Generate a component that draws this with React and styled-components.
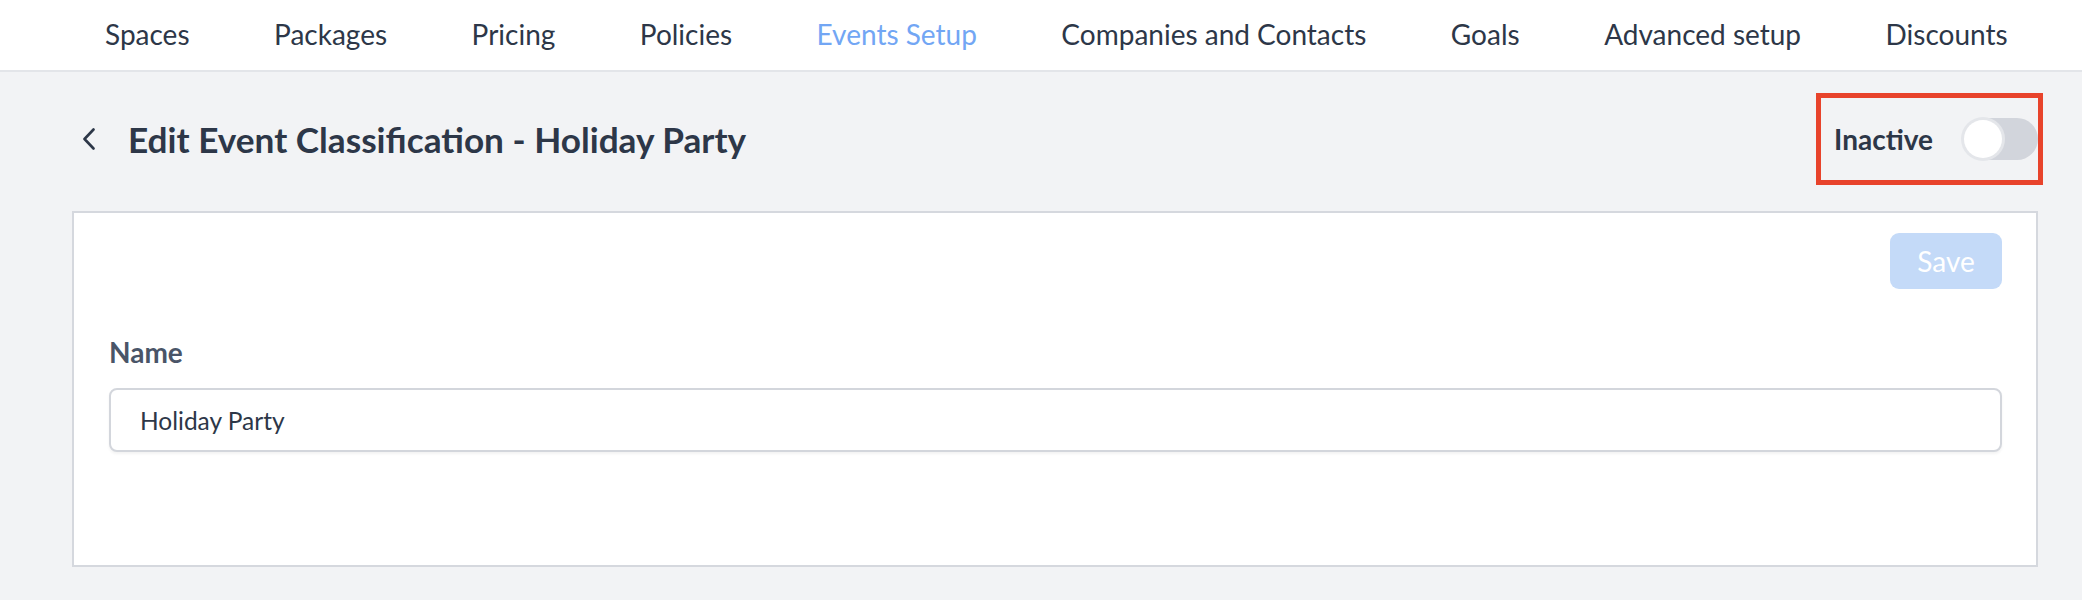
import React, { useState } from "react";
import styled, { createGlobalStyle } from "styled-components";

const GlobalStyle = createGlobalStyle`
  body {
    margin: 0;
    background: #f2f3f5;
    font-family: Lato, "Noto Sans", sans-serif;
    color: #2d3748;
  }
`;

const TopNav = styled.nav`
  height: 70px;
  background: #fff;
  border-bottom: 2px solid #e3e5e9;
  display: flex;
  align-items: center;
  gap: 84.5px;
  padding-left: 105px;
`;

const NavLink = styled.a`
  font-size: 28px;
  line-height: 1.2;
  white-space: nowrap;
  text-decoration: none;
  cursor: pointer;
  color: ${(p) => (p.$active ? "#72a6f4" : "#2d3748")};
`;

const Header = styled.div`
  display: flex;
  align-items: center;
  justify-content: space-between;
  padding: 21px 39px 26px 83px;
`;

const TitleGroup = styled.div`
  display: flex;
  align-items: center;
  gap: 33px;
`;

const BackButton = styled.button`
  border: none;
  background: none;
  padding: 0;
  width: 12px;
  height: 22px;
  display: flex;
  align-items: center;
  cursor: pointer;
  color: #2d3748;
`;

const Title = styled.h1`
  margin: 0;
  font-size: 35.2px;
  line-height: 1.2;
  font-weight: 700;
  color: #2d3748;
`;

const StatusBox = styled.div`
  height: 92px;
  box-sizing: border-box;
  border: 5px solid #e8432b;
  display: flex;
  align-items: center;
  gap: 29px;
  padding: 0 0 0 13px;
`;

const StatusLabel = styled.span`
  font-size: 28px;
  font-weight: 700;
  color: #2d3748;
`;

const Switch = styled.button`
  position: relative;
  width: 76px;
  height: 42px;
  border: none;
  border-radius: 21px;
  padding: 0;
  cursor: pointer;
  background: ${(p) => (p.$on ? "#72a6f4" : "#d2d5dc")};

  &::before {
    content: "";
    position: absolute;
    top: 2px;
    left: ${(p) => (p.$on ? "36px" : "2px")};
    width: 38px;
    height: 38px;
    box-sizing: border-box;
    border-radius: 50%;
    background: #fff;
    box-shadow: 0 0 0 3px #e4e6ea;
    transition: left 0.2s ease;
  }
`;

const Card = styled.section`
  margin: 0 44px 0 72px;
  background: #fff;
  border: 2px solid #d5d8de;
  padding: 20px 34px 113px 35px;
`;

const Actions = styled.div`
  display: flex;
  justify-content: flex-end;
`;

const SaveButton = styled.button`
  width: 112px;
  height: 56px;
  border: none;
  border-radius: 9px;
  background: #c4daf8;
  color: #fff;
  font-family: inherit;
  font-size: 28px;
`;

const Field = styled.div`
  margin-top: 46px;
`;

const Label = styled.label`
  display: block;
  font-size: 28px;
  line-height: 34px;
  font-weight: 700;
  color: #4a5568;
  margin-bottom: 19px;
`;

const TextInput = styled.input`
  display: block;
  width: 100%;
  height: 64px;
  box-sizing: border-box;
  border: 2px solid #d3d6dc;
  border-radius: 8px;
  padding: 0 29px;
  font-family: inherit;
  font-size: 24.5px;
  color: #2d3748;
  box-shadow: 0 2px 3px rgba(0, 0, 0, 0.05);
  outline: none;
`;

const tabs = [
  "Spaces",
  "Packages",
  "Pricing",
  "Policies",
  "Events Setup",
  "Companies and Contacts",
  "Goals",
  "Advanced setup",
  "Discounts",
];

export default function App() {
  const [active, setActive] = useState(false);
  const [name, setName] = useState("Holiday Party");

  return (
    <>
      <GlobalStyle />
      <TopNav>
        {tabs.map((t) => (
          <NavLink key={t} $active={t === "Events Setup"}>
            {t}
          </NavLink>
        ))}
      </TopNav>

      <Header>
        <TitleGroup>
          <BackButton aria-label="Back">
            <svg width="12" height="22" viewBox="0 0 12 22" fill="none">
              <polyline
                points="10.5,1.5 1.5,11 10.5,20.5"
                stroke="currentColor"
                strokeWidth="2.6"
                strokeLinecap="round"
                strokeLinejoin="round"
              />
            </svg>
          </BackButton>
          <Title>Edit Event Classification - Holiday Party</Title>
        </TitleGroup>
        <StatusBox>
          <StatusLabel>{active ? "Active" : "Inactive"}</StatusLabel>
          <Switch $on={active} onClick={() => setActive(!active)} aria-label="Toggle status" />
        </StatusBox>
      </Header>

      <Card>
        <Actions>
          <SaveButton disabled>Save</SaveButton>
        </Actions>
        <Field>
          <Label htmlFor="name">Name</Label>
          <TextInput id="name" value={name} onChange={(e) => setName(e.target.value)} />
        </Field>
      </Card>
    </>
  );
}
